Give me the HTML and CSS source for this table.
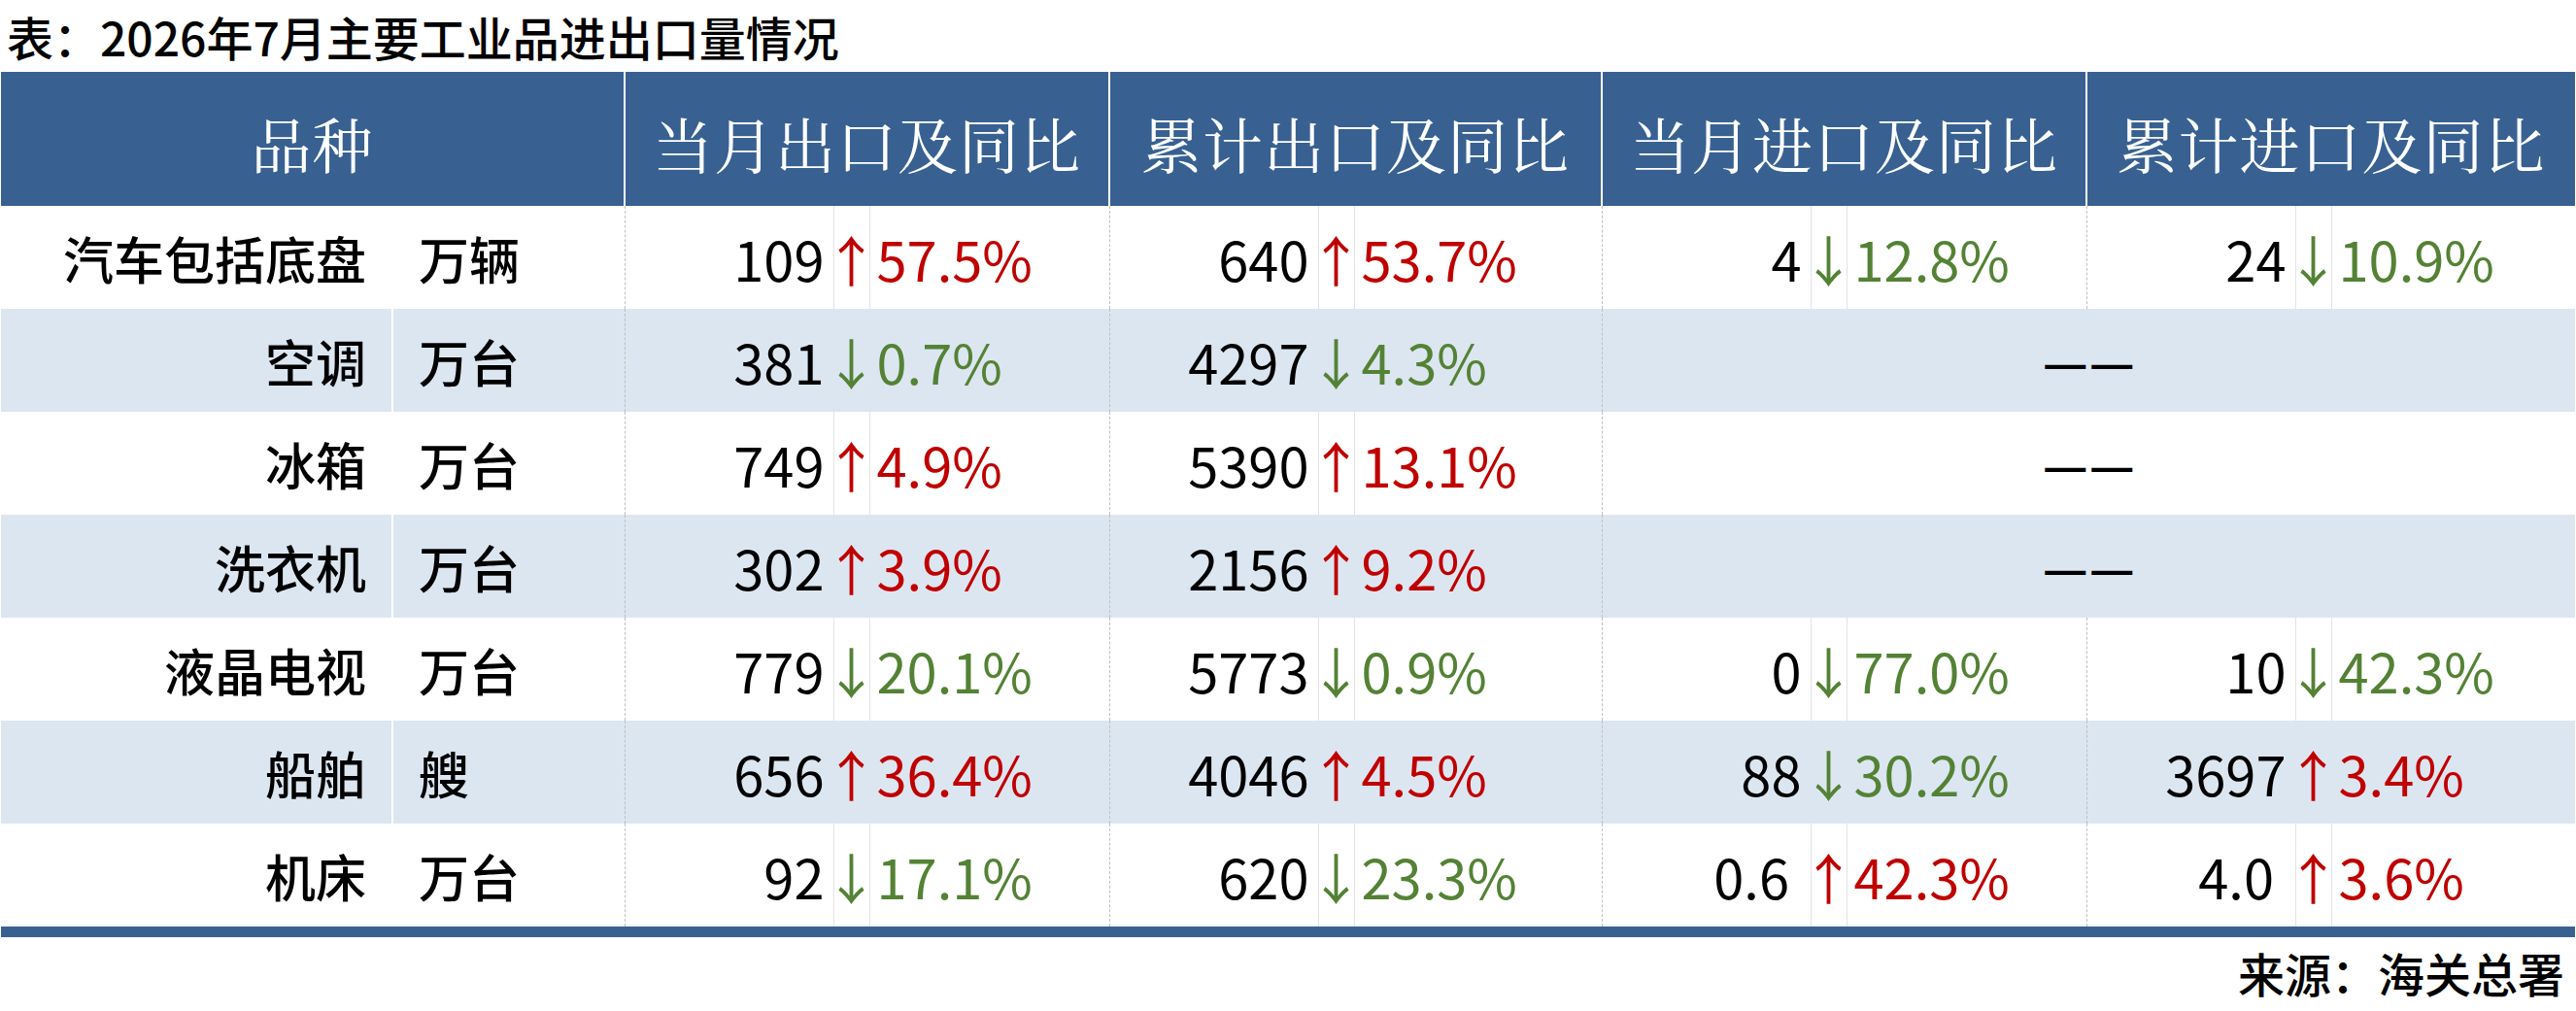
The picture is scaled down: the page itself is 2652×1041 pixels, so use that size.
FILE: index.html
```html
<!DOCTYPE html>
<html lang="zh-CN">
<head>
<meta charset="utf-8">
<title>2026年7月主要工业品进出口量情况</title>
<link rel="stylesheet" href="styles.css">
</head>
<body>
<div class="page">
  <div class="title">表：2026年7月主要工业品进出口量情况</div>
  <table class="tbl">
    <colgroup>
      <col class="c-name"><col class="c-unit">
      <col class="c-num"><col class="c-arr"><col class="c-pct2">
      <col class="c-num"><col class="c-arr"><col class="c-pct3">
      <col class="c-num"><col class="c-arr"><col class="c-pct4">
      <col class="c-num"><col class="c-arr"><col class="c-pct5">
    </colgroup>
    <thead>
      <tr class="hdr">
        <th colspan="2" class="first">品种</th>
        <th colspan="3">当月出口及同比</th>
        <th colspan="3">累计出口及同比</th>
        <th colspan="3">当月进口及同比</th>
        <th colspan="3">累计进口及同比</th>
      </tr>
    </thead>
    <tbody>
      <tr>
        <td class="name">汽车包括底盘</td><td class="unit">万辆</td>
        <td class="num">109</td><td class="arr up"><span class="aw">↑</span></td><td class="pct up">57.5%</td>
        <td class="num">640</td><td class="arr up"><span class="aw">↑</span></td><td class="pct up">53.7%</td>
        <td class="num">4</td><td class="arr dn"><span class="aw">↓</span></td><td class="pct dn">12.8%</td>
        <td class="num">24</td><td class="arr dn"><span class="aw">↓</span></td><td class="pct dn">10.9%</td>
      </tr>
      <tr class="alt">
        <td class="name">空调</td><td class="unit">万台</td>
        <td class="num">381</td><td class="arr dn"><span class="aw">↓</span></td><td class="pct dn">0.7%</td>
        <td class="num">4297</td><td class="arr dn"><span class="aw">↓</span></td><td class="pct dn">4.3%</td>
        <td class="none" colspan="6"><span class="dash">——</span></td>
      </tr>
      <tr>
        <td class="name">冰箱</td><td class="unit">万台</td>
        <td class="num">749</td><td class="arr up"><span class="aw">↑</span></td><td class="pct up">4.9%</td>
        <td class="num">5390</td><td class="arr up"><span class="aw">↑</span></td><td class="pct up">13.1%</td>
        <td class="none" colspan="6"><span class="dash">——</span></td>
      </tr>
      <tr class="alt">
        <td class="name">洗衣机</td><td class="unit">万台</td>
        <td class="num">302</td><td class="arr up"><span class="aw">↑</span></td><td class="pct up">3.9%</td>
        <td class="num">2156</td><td class="arr up"><span class="aw">↑</span></td><td class="pct up">9.2%</td>
        <td class="none" colspan="6"><span class="dash">——</span></td>
      </tr>
      <tr>
        <td class="name">液晶电视</td><td class="unit">万台</td>
        <td class="num">779</td><td class="arr dn"><span class="aw">↓</span></td><td class="pct dn">20.1%</td>
        <td class="num">5773</td><td class="arr dn"><span class="aw">↓</span></td><td class="pct dn">0.9%</td>
        <td class="num">0</td><td class="arr dn"><span class="aw">↓</span></td><td class="pct dn">77.0%</td>
        <td class="num">10</td><td class="arr dn"><span class="aw">↓</span></td><td class="pct dn">42.3%</td>
      </tr>
      <tr class="alt">
        <td class="name">船舶</td><td class="unit">艘</td>
        <td class="num">656</td><td class="arr up"><span class="aw">↑</span></td><td class="pct up">36.4%</td>
        <td class="num">4046</td><td class="arr up"><span class="aw">↑</span></td><td class="pct up">4.5%</td>
        <td class="num">88</td><td class="arr dn"><span class="aw">↓</span></td><td class="pct dn">30.2%</td>
        <td class="num">3697</td><td class="arr up"><span class="aw">↑</span></td><td class="pct up">3.4%</td>
      </tr>
      <tr>
        <td class="name">机床</td><td class="unit">万台</td>
        <td class="num">92</td><td class="arr dn"><span class="aw">↓</span></td><td class="pct dn">17.1%</td>
        <td class="num">620</td><td class="arr dn"><span class="aw">↓</span></td><td class="pct dn">23.3%</td>
        <td class="num">0.6&nbsp;</td><td class="arr up"><span class="aw">↑</span></td><td class="pct up">42.3%</td>
        <td class="num">4.0&nbsp;</td><td class="arr up"><span class="aw">↑</span></td><td class="pct up">3.6%</td>
      </tr>
    </tbody>
  </table>
  <div class="bar"></div>
  <div class="source">来源：海关总署</div>
</div>
</body>
</html>
```

FILE: styles.css
```css
html, body {
  margin: 0;
  padding: 0;
  background: #ffffff;
}

.page {
  width: 2652px;
  height: 1041px;
  overflow: hidden;
  font-family: "Noto Sans CJK SC", "Noto Sans", sans-serif;
  color: #000000;
}

.title {
  height: 74px;
  line-height: 74px;
  font-size: 48px;
  font-weight: 500;
  padding-left: 7px;
  white-space: nowrap;
}

.tbl {
  width: 2650px;
  margin-left: 1px;
  border-collapse: collapse;
  table-layout: fixed;
}

.c-name { width: 403px; }
.c-unit { width: 239px; }
.c-num { width: 215px; }
.c-arr { width: 37px; }
.c-pct2 { width: 247px; }
.c-pct3 { width: 255px; }
.c-pct4 { width: 247px; }
.c-pct5 { width: 251px; }

.tbl th,
.tbl td {
  padding: 0;
  white-space: nowrap;
}

.hdr th {
  height: 138px;
  box-sizing: border-box;
  padding-top: 8px;
  background: #386192;
  color: #ffffff;
  font-family: "Noto Serif CJK SC", "Source Han Serif SC", "AR PL UMing CN", "Noto Sans CJK SC", serif;
  font-size: 62px;
  font-weight: 400;
  letter-spacing: 1px;
  text-align: center;
  vertical-align: middle;
  border-left: 2px solid #ffffff;
}

.hdr th.first {
  border-left: none;
}

.tbl tbody tr {
  height: 106px;
  background: #ffffff;
}

.tbl tbody tr.alt {
  background: #dce6f1;
}

.tbl td {
  vertical-align: middle;
}

.name {
  text-align: right;
  padding-right: 26px !important;
  font-size: 52px;
  font-weight: 500;
}

.unit {
  text-align: left;
  padding-left: 26px !important;
  font-size: 52px;
  font-weight: 500;
  border-left: 2px solid #ffffff;
}

.num {
  text-align: right;
  padding-right: 9px !important;
  font-size: 56px;
  border-left: 1px dashed #bfbfbf;
}

.arr {
  font-size: 56px;
  border-left: 1px solid #e3e3e3;
}

.aw {
  display: flex;
  justify-content: center;
  width: 100%;
}

.pct {
  text-align: left;
  padding-left: 7px !important;
  font-size: 56px;
  border-left: 1px solid #e3e3e3;
}

.tbl tbody tr.alt .arr,
.tbl tbody tr.alt .pct {
  border-left-color: #dce6f1;
}

.up { color: #c00000; }
.dn { color: #548235; }

.none {
  text-align: center;
  border-left: 1px dashed #bfbfbf;
}

.none .dash {
  display: inline-block;
  font-family: "Liberation Sans", sans-serif;
  font-size: 42px;
  font-weight: 700;
  letter-spacing: 6px;
  padding-left: 6px;
  line-height: 50px;
  position: relative;
  top: 4px;
}

.bar {
  height: 11px;
  width: 2650px;
  margin-left: 1px;
  background: #386192;
}

.source {
  height: 76px;
  line-height: 72px;
  font-size: 48px;
  font-weight: 500;
  text-align: right;
  padding-right: 12px;
  white-space: nowrap;
}
```
